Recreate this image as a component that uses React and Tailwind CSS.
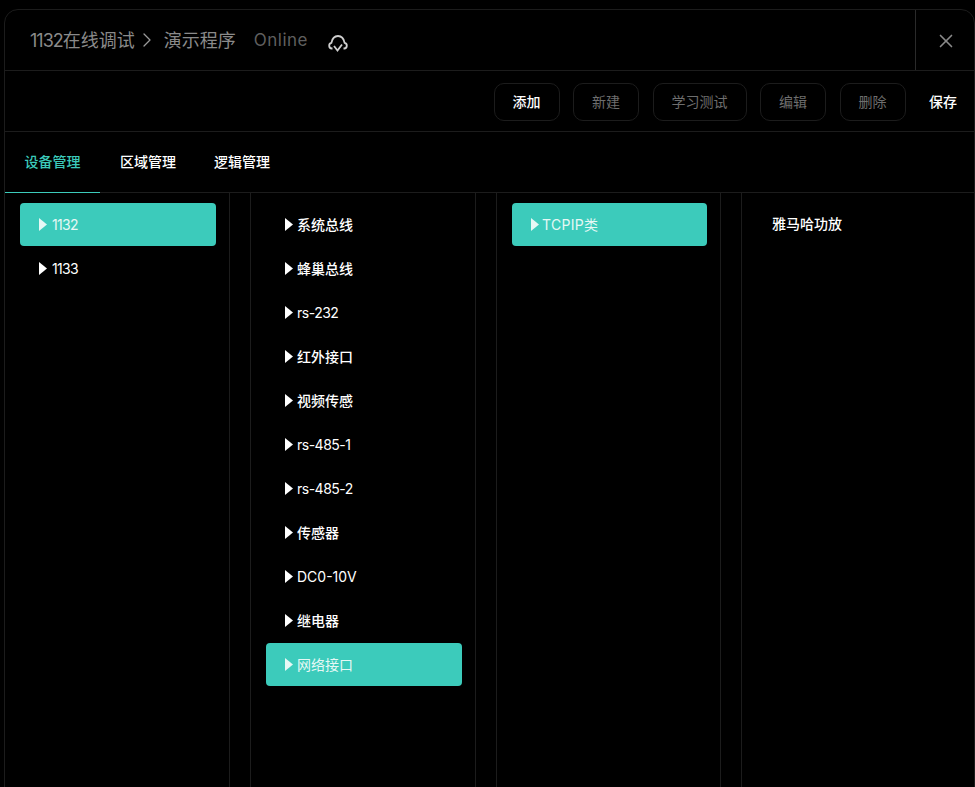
import React from "react";
import { ChevronRight, X } from "lucide-react";

const col1 = [
  { name: "1132", active: true, cls: "ml-px tracking-[-0.7px]" },
  { name: "1133", cls: "ml-px tracking-[-0.7px]" },
];
const col2 = [
  { name: "系统总线", cls: "font-medium" },
  { name: "蜂巢总线", cls: "font-medium" },
  { name: "rs-232", cls: "tracking-[-0.5px]" },
  { name: "红外接口", cls: "font-medium" },
  { name: "视频传感", cls: "font-medium" },
  { name: "rs-485-1", cls: "tracking-[-0.5px]" },
  { name: "rs-485-2", cls: "tracking-[-0.5px]" },
  { name: "传感器", cls: "font-medium" },
  { name: "DC0-10V", cls: "" },
  { name: "继电器", cls: "font-medium" },
  { name: "网络接口", active: true, cls: "" },
];
const col3 = [{ name: "TCPIP类", active: true, cls: "-ml-px tracking-[0.3px]" }];

const Arrow = () => (
  <svg width="8" height="13" viewBox="0 0 8 13" className="mr-[4px] shrink-0">
    <path d="M0 0 L8 6.5 L0 13 Z" fill="currentColor" />
  </svg>
);

const CloudCheck = () => (
  <svg width="20" height="18" viewBox="0 0 20 18" fill="none" stroke="#cfcfcf" strokeWidth="1.8" className="ml-5 mt-[7px]">
    <path d="M4.5 13.5 H3.8 A2.9 2.9 0 0 1 3.4 7.8 C4.2 3.6 6.8 1 10 1 C13.2 1 15.8 3.6 16.6 7.8 A2.9 2.9 0 0 1 16.2 13.5 H15.5" />
    <path d="M6 11 L9.5 15.5 L14 9.5" />
  </svg>
);

const Item = ({ item, hideArrow }) => (
  <div
    className={`flex items-center h-[43px] mb-px pl-[19px] rounded-[4px] text-sm ${
      item.active ? "bg-[#3ccbbb] text-[#e6f8f5]" : "text-white"
    }`}
  >
    {!hideArrow && <Arrow />}
    <span className={item.cls}>{item.name}</span>
  </div>
);

const Btn = ({ label, on }) => (
  <button
    className={`h-[38px] px-[18px] mr-[13.5px] rounded-[10px] border border-[#1c1c1c] text-sm ${
      on ? "text-white font-medium" : "text-[#6e6e6e]"
    }`}
  >
    {label}
  </button>
);

export default function App() {
  return (
    <div
      className="h-[787px] overflow-hidden bg-black pt-[9px] pl-[4px]"
      style={{ fontFamily: '"Inter", "Noto Sans CJK SC", sans-serif' }}
    >
      <div className="h-[800px] border border-[#1c1c1c] rounded-t-[14px] flex flex-col">
        {/* header */}
        <div className="h-[61px] flex border-b border-[#1c1c1c] shrink-0">
          <div className="flex-1 flex items-center pl-[25px] text-[18px] text-[#8a8a8a]">
            <span>
              <span className="tracking-[-1px]">1132</span>在线调试
            </span>
            <ChevronRight size={24} strokeWidth={1.3} className="mr-[5px] text-[#9a9a9a]" />
            <span>演示程序</span>
            <span className="ml-[18px] pt-[2px] text-[17px] text-[#5f5f5f] tracking-[0.5px]">Online</span>
            <CloudCheck />
          </div>
          <div className="w-[59px] border-l border-[#2a2a2a] flex items-center justify-center text-[#8a8a8a] pl-[2px] pt-[2px]">
            <X size={22} strokeWidth={1.8} />
          </div>
        </div>

        {/* toolbar */}
        <div className="h-[61px] flex items-center justify-end border-b border-[#1c1c1c] shrink-0 pr-[17px] pt-[2px]">
          <Btn label="添加" on />
          <Btn label="新建" />
          <Btn label="学习测试" />
          <Btn label="编辑" />
          <Btn label="删除" />
          <span className="text-sm text-white font-medium ml-[10px]">保存</span>
        </div>

        {/* tabs */}
        <div className="h-[61px] flex items-stretch border-b border-[#1c1c1c] shrink-0 text-sm font-medium">
          <div className="w-[95px] -mb-px border-b border-[#3ccbbb] flex items-center justify-center text-[#3ccbbb]">
            设备管理
          </div>
          <div className="ml-[20px] flex items-center text-white">区域管理</div>
          <div className="ml-[38px] flex items-center text-white">逻辑管理</div>
        </div>

        {/* columns */}
        <div className="flex-1 flex">
          <div className="w-[225px] mr-5 border-r border-[#1c1c1c] pt-[10px] pl-[15px] pr-[13px]">
            {col1.map((item) => (
              <Item key={item.name} item={item} />
            ))}
          </div>
          <div className="w-[226px] mr-5 border-x border-[#1c1c1c] pt-[10px] pl-[15px] pr-[13px]">
            {col2.map((item) => (
              <Item key={item.name} item={item} />
            ))}
          </div>
          <div className="w-[225px] mr-5 border-x border-[#1c1c1c] pt-[10px] pl-[15px] pr-[13px]">
            {col3.map((item) => (
              <Item key={item.name} item={item} />
            ))}
          </div>
          <div className="flex-1 border-l border-[#1c1c1c] pt-[9px] pl-[11px]">
            <Item item={{ name: "雅马哈功放", cls: "font-medium" }} hideArrow />
          </div>
        </div>
      </div>
    </div>
  );
}
